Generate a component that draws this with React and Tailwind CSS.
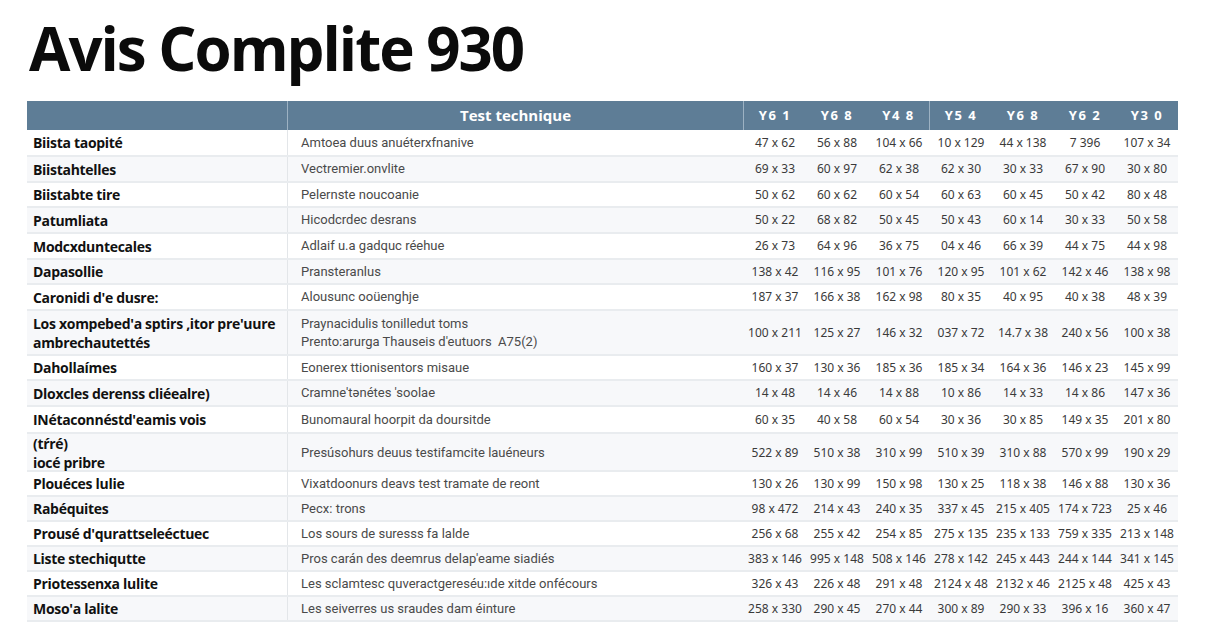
import React from "react";

const rows = [
  { a: "Biista taopité", b: "Amtoea duus anuéterxfnanive", n: ["47 x 62", "56 x 88", "104 x 66", "10 x 129", "44 x 138", "7 396", "107 x 34"], h: "h-[27px]" },
  { a: "Biistahtelles", b: "Vectremier.onvlite", n: ["69 x 33", "60 x 97", "62 x 38", "62 x 30", "30 x 33", "67 x 90", "30 x 80"], h: "h-[26px]" },
  { a: "Biistabte tire", b: "Pelernste noucoanie", n: ["50 x 62", "60 x 62", "60 x 54", "60 x 63", "60 x 45", "50 x 42", "80 x 48"], h: "h-[25px]" },
  { a: "Patumliata", b: "Hicodcrdec desrans", n: ["50 x 22", "68 x 82", "50 x 45", "50 x 43", "60 x 14", "30 x 33", "50 x 58"], h: "h-[26px]" },
  { a: "Modcxduntecales", b: "Adlaif u.a gadquc réehue", n: ["26 x 73", "64 x 96", "36 x 75", "04 x 46", "66 x 39", "44 x 75", "44 x 98"], h: "h-[26px]" },
  { a: "Dapasollie", b: "Pransteranlus", n: ["138 x 42", "116 x 95", "101 x 76", "120 x 95", "101 x 62", "142 x 46", "138 x 98"], h: "h-[25px]" },
  { a: "Caronidi d'e dusre:", b: "Alousunc ooüenghje", n: ["187 x 37", "166 x 38", "162 x 98", "80 x 35", "40 x 95", "40 x 38", "48 x 39"], h: "h-[26px]" },
  { a: ["Los xompebed'a sptirs ,itor pre'uure", "ambrechautettés"], b: ["Praynacidulis tonilledut toms", "Prento:arurga Thauseis d'eutuors  A75(2)"], n: ["100 x 211", "125 x 27", "146 x 32", "037 x 72", "14.7 x 38", "240 x 56", "100 x 38"], h: "h-[45px]" },
  { a: "Dahollaímes", b: "Eonerex ttionisentors misaue", n: ["160 x 37", "130 x 36", "185 x 36", "185 x 34", "164 x 36", "146 x 23", "145 x 99"], h: "h-[25px]" },
  { a: "Dloxcles derenss cliéealre)", b: "Cramne'tənétes 'soolae", n: ["14 x 48", "14 x 46", "14 x 88", "10 x 86", "14 x 33", "14 x 86", "147 x 36"], h: "h-[26px]" },
  { a: "INétaconnéstd'eamis vois", b: "Bunomaural hoorpit da doursitde", n: ["60 x 35", "40 x 58", "60 x 54", "30 x 36", "30 x 85", "149 x 35", "201 x 80"], h: "h-[27px]" },
  { a: ["(tŕré)", "iocé pribre"], b: "Presúsohurs deuus testifamcite lauéneurs", n: ["522 x 89", "510 x 38", "310 x 99", "510 x 39", "310 x 88", "570 x 99", "190 x 29"], h: "h-[38px]" },
  { a: "Plouéces lulie", b: "Vixatdoonurs deavs test tramate de reont", n: ["130 x 26", "130 x 99", "150 x 98", "130 x 25", "118 x 38", "146 x 88", "130 x 36"], h: "h-[25px]" },
  { a: "Rabéquites", b: "Pecx: trons", n: ["98 x 472", "214 x 43", "240 x 35", "337 x 45", "215 x 405", "174 x 723", "25 x 46"], h: "h-[25px]" },
  { a: "Prousé d'qurattseleéctuec", b: "Los sours de suresss fa lalde", n: ["256 x 68", "255 x 42", "254 x 85", "275 x 135", "235 x 133", "759 x 335", "213 x 148"], h: "h-[25px]" },
  { a: "Liste stechiqutte", b: "Pros carán des deemrus delap'eame siadiés", n: ["383 x 146", "995 x 148", "508 x 146", "278 x 142", "245 x 443", "244 x 144", "341 x 145"], h: "h-[25px]" },
  { a: "Priotessenxa lulite", b: "Les sclamtesc quveractgereséu:ıde xitde onfécours", n: ["326 x 43", "226 x 48", "291 x 48", "2124 x 48", "2132 x 46", "2125 x 48", "425 x 43"], h: "h-[25px]" },
  { a: "Moso'a lalite", b: "Les seiverres us sraudes dam éinture", n: ["258 x 330", "290 x 45", "270 x 44", "300 x 89", "290 x 33", "396 x 16", "360 x 47"], h: "h-[25px]" },
];

const heads = ["Y6 1", "Y6 8", "Y4 8", "Y5 4", "Y6 8", "Y6 2", "Y3 0"];

const grid = "grid grid-cols-[261px_456px_repeat(7,62px)]";

export default function App() {
  return (
    <div className="w-[1216px] h-[640px] bg-white overflow-hidden px-[27px]">
      <h1
        className="pt-[18px] h-[78px] mb-[23px] ml-[2px] text-[60px] leading-none font-bold tracking-[-2px] text-[#0b0b0b]"
        style={{ fontFamily: '"Open Sans", sans-serif' }}
      >
        Avis Complite 930
      </h1>

      <div className="w-[1151px]">
        <div className={`${grid} h-[29px] bg-[#5e7d96] text-white`}>
          <div className="border-r border-[#9db2c3]" />
          <div
            className="border-r border-[#9db2c3] flex items-center justify-center text-[15px] font-bold"
            style={{ fontFamily: '"Open Sans", sans-serif' }}
          >
            Test technique
          </div>
          {heads.map((h, i) => (
            <div
              key={i}
              className={`flex items-center justify-center text-[13px] font-bold tracking-[1.5px] ${i === 2 ? "border-r border-[#9db2c3]" : ""}`}
              style={{ fontFamily: '"Noto Sans", sans-serif' }}
            >
              {h}
            </div>
          ))}
        </div>

        {rows.map((r, i) => (
          <div
            key={i}
            className={`${grid} ${r.h} border-b-2 border-[#e9ecef] ${i % 2 === 1 ? "bg-[#f7f8fa]" : "bg-white"}`}
          >
            <div
              className="border-r border-[#e3e6e9] pl-[6px] flex flex-col justify-center text-[14px] leading-[19px] font-bold tracking-[-0.3px] text-[#111]"
              style={{ fontFamily: '"Open Sans", sans-serif' }}
            >
              {Array.isArray(r.a) ? r.a.map((t, k) => <div key={k} className="whitespace-nowrap">{t}</div>) : <div className="whitespace-nowrap">{r.a}</div>}
            </div>
            <div
              className="pl-[13px] flex flex-col justify-center text-[13px] leading-[18px] text-[#4a4a4a] whitespace-pre"
              style={{ fontFamily: 'Roboto, sans-serif' }}
            >
              {Array.isArray(r.b) ? r.b.map((t, k) => <div key={k}>{t}</div>) : <div>{r.b}</div>}
            </div>
            {r.n.map((v, k) => (
              <div
                key={k}
                className="flex items-center justify-center text-[12px] text-[#3a3a3a] whitespace-nowrap"
                style={{ fontFamily: '"Noto Sans", sans-serif' }}
              >
                {v}
              </div>
            ))}
          </div>
        ))}
      </div>
    </div>
  );
}
